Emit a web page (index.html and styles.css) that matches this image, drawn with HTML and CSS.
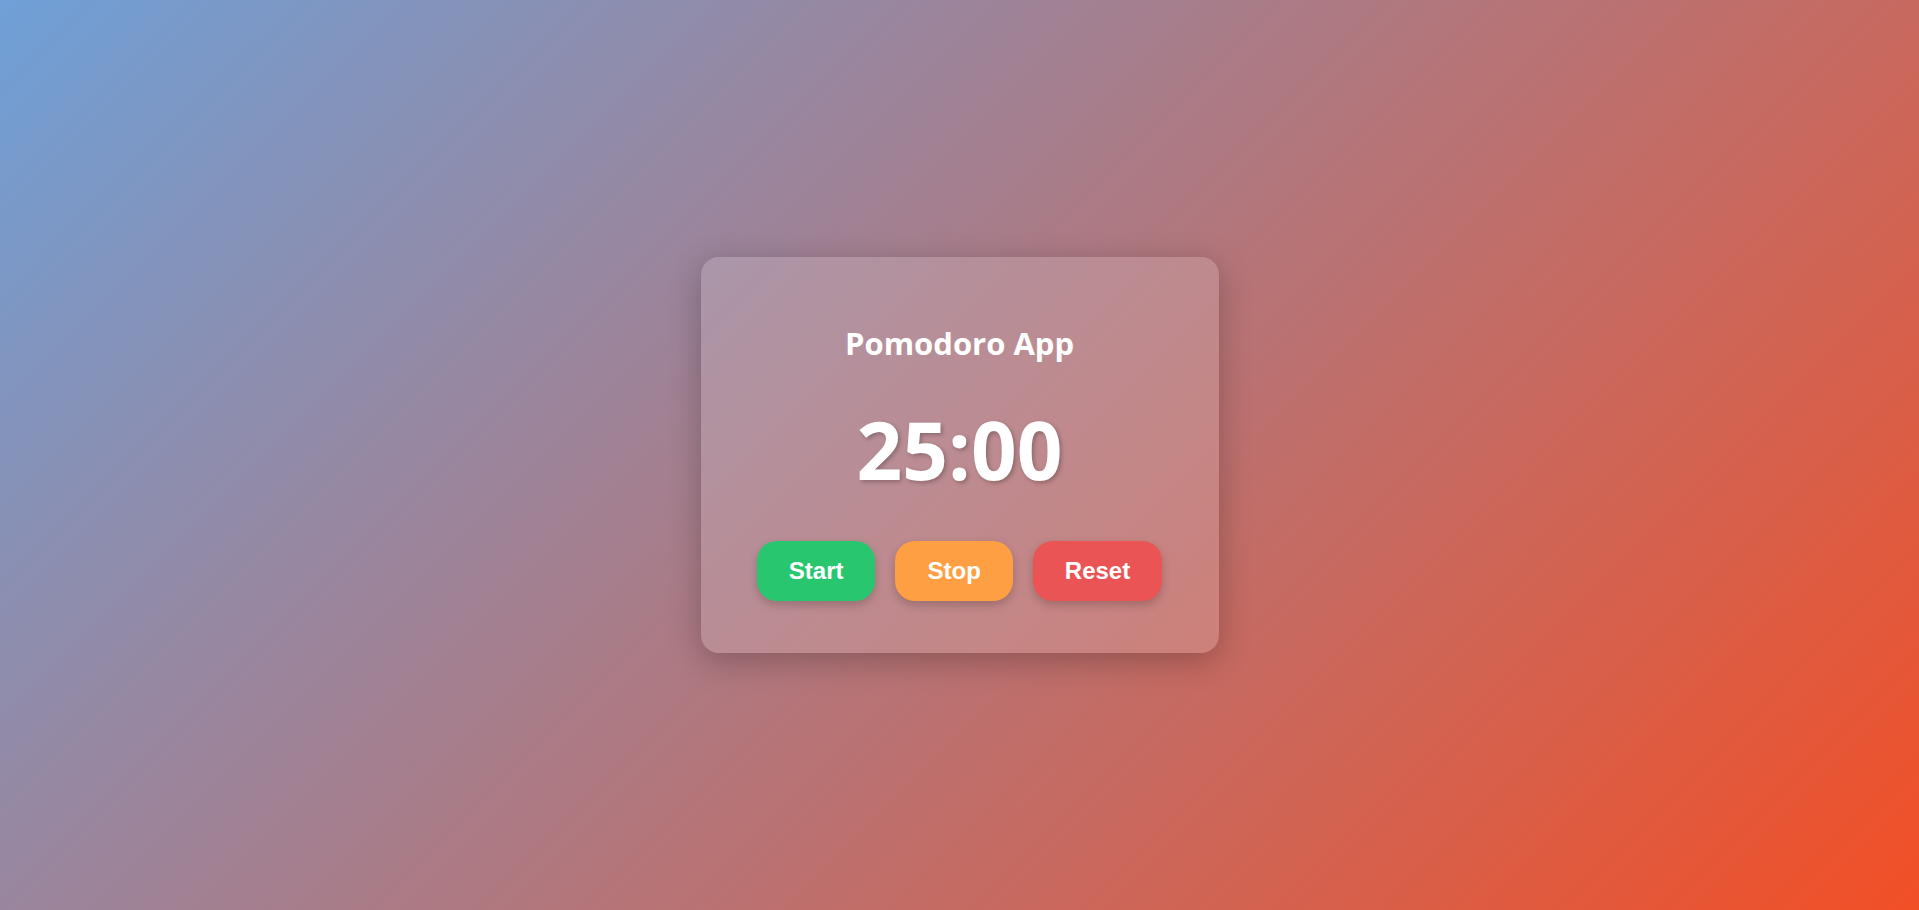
FILE: index.html
```html
<!DOCTYPE html>
<html lang="en">
<head>
<meta charset="utf-8">
<title>Pomodoro App</title>
<link rel="stylesheet" href="styles.css">
</head>
<body>
<main class="card">
  <h1 class="title">Pomodoro App</h1>
  <div class="timer">25:00</div>
  <div class="controls">
    <button class="btn btn-start">Start</button>
    <button class="btn btn-stop">Stop</button>
    <button class="btn btn-reset">Reset</button>
  </div>
</main>
</body>
</html>
```
FILE: styles.css
```css
html, body {
  height: 100%;
}
body {
  margin: 0;
  min-height: 100vh;
  display: flex;
  align-items: center;
  justify-content: center;
  background: linear-gradient(135deg, #6fa0d7 0%, #f24f26 100%);
  font-family: "Open Sans", "Noto Sans", sans-serif;
  color: #fff;
}
.card {
  box-sizing: border-box;
  width: 518px;
  padding: 40px 40px 52px;
  border-radius: 18px;
  background: rgba(255, 255, 255, 0.15);
  box-shadow: 0 8px 32px rgba(0, 0, 0, 0.25);
  display: flex;
  flex-direction: column;
  align-items: center;
  text-align: center;
}
.title {
  margin: 25px 0 0;
  font-size: 31px;
  font-weight: 700;
  line-height: 1.362;
}
.timer {
  margin: 31px 0 0;
  font-size: 80px;
  font-weight: 700;
  line-height: 1.362;
  text-shadow: 2px 2px 4px rgba(0, 0, 0, 0.25);
}
.controls {
  margin-top: 37px;
  display: flex;
  gap: 20px;
  justify-content: center;
}
.btn {
  font-family: "Liberation Sans", Arial, sans-serif;
  font-size: 24px;
  font-weight: 700;
  color: #fff;
  border: none;
  border-radius: 20px;
  padding: 16px 32px;
  line-height: normal;
  box-shadow: 0 4px 10px rgba(0, 0, 0, 0.2);
  cursor: pointer;
}
.btn-start { background: #28c76f; }
.btn-stop { background: #ff9f43; }
.btn-reset { background: #ea5455; }
```
